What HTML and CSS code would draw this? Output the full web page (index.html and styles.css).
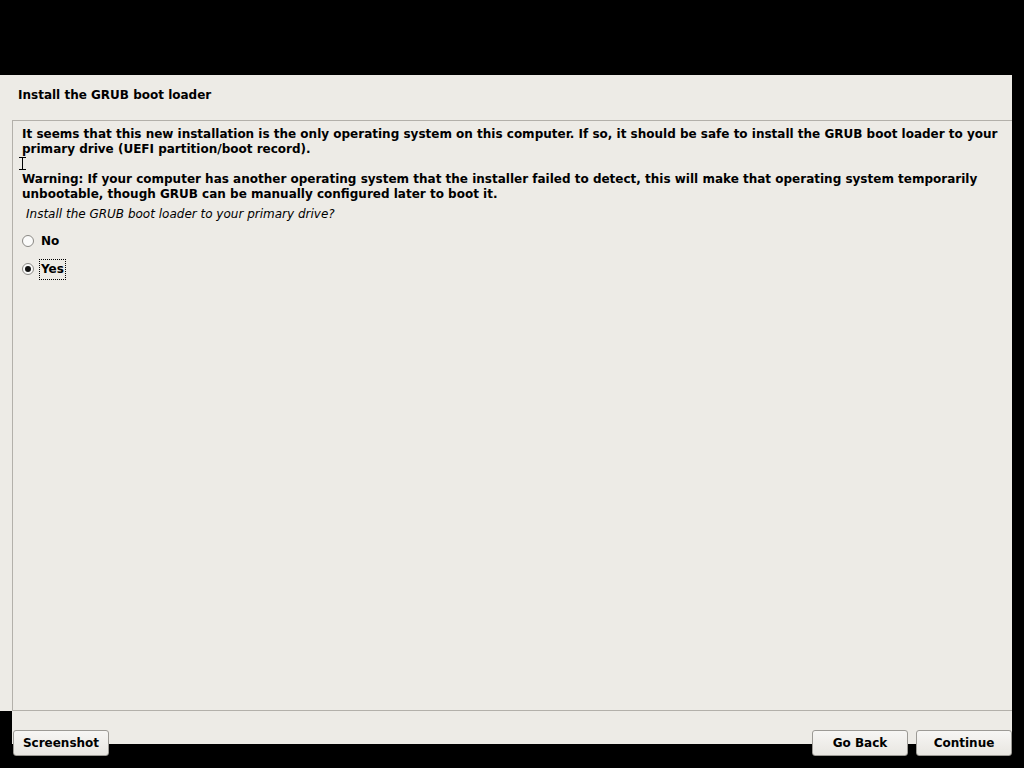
FILE: index.html
```html
<!DOCTYPE html>
<html>
<head>
<meta charset="utf-8">
<link rel="stylesheet" href="styles.css">
</head>
<body>
<div class="screen">
  <div class="main">
    <div class="title">Install the GRUB boot loader</div>
    <div class="box">
      <div class="desc">It seems that this new installation is the only operating system on this computer. If so, it should be safe to install the GRUB boot loader to your primary drive (UEFI partition/boot record).<br><br>Warning: If your computer has another operating system that the installer failed to detect, this will make that operating system temporarily unbootable, though GRUB can be manually configured later to boot it.</div>
      <div class="question">Install the GRUB boot loader to your primary drive?</div>
      <div class="options">
        <div class="option"><span class="radio"></span><span class="label">No</span></div>
        <div class="option"><span class="radio checked"></span><span class="label focus">Yes</span></div>
      </div>
      <svg class="cursor" width="7" height="13" viewBox="0 0 7 13"><path d="M0 0.5H7M3.5 0.5V12.5M0 12.5H7" stroke="#000" stroke-width="1" fill="none"/></svg>
    </div>
  </div>
  <div class="footer">
    <button class="btn">Screenshot</button>
    <div class="spacer"></div>
    <button class="btn">Go Back</button>
    <button class="btn">Continue</button>
  </div>
</div>
</body>
</html>
```
FILE: styles.css
```css
html, body {
  margin: 0;
  padding: 0;
  background: #000;
}
body {
  width: 1024px;
  height: 768px;
  overflow: hidden;
  font-family: "DejaVu Sans", Verdana, sans-serif;
  font-size: 12px;
  color: #000;
}
.screen {
  padding-top: 75px;
  display: flex;
  flex-direction: column;
}
.main {
  width: 1012px;
  height: 636px;
  background: #edebe6;
  display: flex;
  flex-direction: column;
}
.title {
  height: 45px;
  box-sizing: border-box;
  padding: 12px 0 0 18px;
  font-weight: bold;
  line-height: 16px;
}
.box {
  position: relative;
  flex: 1;
  margin-left: 12px;
  border-top: 1px solid #b3b0aa;
  border-left: 1px solid #b3b0aa;
  border-bottom: 1px solid #b3b0aa;
  padding: 6px 8px 0 9px;
}
.desc {
  font-weight: bold;
  line-height: 15px;
}
.question {
  font-style: italic;
  line-height: 15px;
  margin-top: 5px;
  padding-left: 4px;
}
.options {
  margin-top: 8px;
  display: flex;
  flex-direction: column;
  gap: 6px;
}
.option {
  display: flex;
  align-items: center;
  height: 22px;
}
.radio {
  width: 12px;
  height: 12px;
  border: 1px solid #8a8884;
  border-radius: 50%;
  background: #fbfbfa;
  margin-left: 0;
  margin-right: 5px;
  position: relative;
  box-sizing: border-box;
  flex: none;
}
.radio.checked::after {
  content: "";
  position: absolute;
  left: 2px;
  top: 2px;
  width: 6px;
  height: 6px;
  border-radius: 50%;
  background: #111;
}
.label {
  font-weight: bold;
  padding: 2px 1px;
  border: 1px dotted transparent;
  line-height: 15px;
}
.label.focus {
  border-color: #000;
}
.cursor {
  position: absolute;
  left: 6px;
  top: 36px;
}
.footer {
  margin-left: 12px;
  width: 1000px;
  height: 33px;
  background: #edebe6;
  display: flex;
  align-items: flex-start;
  padding-top: 19px;
  box-sizing: border-box;
  gap: 8px;
}
.spacer {
  flex: 1;
}
.btn {
  flex: none;
  width: 96px;
  height: 26px;
  margin: 0;
  font-family: "DejaVu Sans", Verdana, sans-serif;
  font-size: 12px;
  font-weight: bold;
  color: #000;
  background: linear-gradient(#f7f6f4, #e8e6e1);
  border: 1px solid #9c9a95;
  border-radius: 3px;
  padding: 0;
}
.btn:first-child {
  margin-left: 1px;
}
```
